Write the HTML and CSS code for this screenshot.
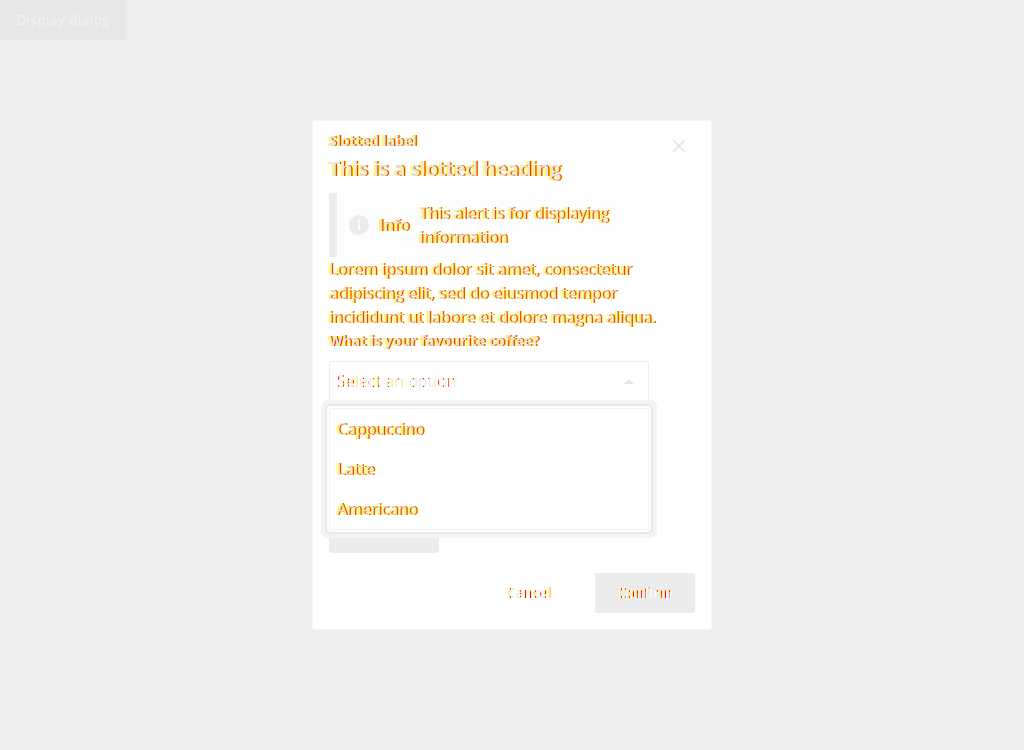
FILE: index.html
```html
<!DOCTYPE html>
<html lang="en">
<head>
<meta charset="utf-8">
<title>Dialog</title>
<link rel="stylesheet" href="styles.css">
</head>
<body>
<button class="launch" type="button">Display dialog</button>
<div class="backdrop">
  <section class="dialog" role="dialog" aria-labelledby="heading">
    <header class="dialog-header">
      <div class="titles">
        <p class="label ink">Slotted label</p>
        <h2 class="heading ink" id="heading">This is a slotted heading</h2>
      </div>
      <button class="close" type="button" aria-label="Close">
        <svg width="12" height="12" viewBox="0 0 12 12"><path d="M.5 .5 11.5 11.5M11.5 .5 .5 11.5" stroke="#e5e5e5" stroke-width="1.6" fill="none"/></svg>
      </button>
    </header>
    <div class="alert">
      <svg width="20" height="20" viewBox="0 0 20 20"><circle cx="10" cy="10" r="10" fill="#ebebeb"/><path d="M9 5h2v2H9zM9 8h2v7H9z" fill="#fff"/></svg>
      <strong class="alert-title ink">Info</strong>
      <span class="ink">This alert is for displaying information</span>
    </div>
    <p class="copy ink">Lorem ipsum dolor sit amet, consectetur adipiscing elit, sed do eiusmod tempor incididunt ut labore et dolore magna aliqua.</p>
    <div class="field">
      <label class="field-label ink" for="coffee">What is your favourite coffee?</label>
      <div class="picker">
        <select class="select ink faint" id="coffee"><option>Select an option</option></select>
        <svg class="arrow" width="10" height="5" viewBox="0 0 10 5"><path d="M0 5 5 0 10 5z" fill="#e6e6e6"/></svg>
        <ul class="menu" role="listbox" aria-label="Coffee">
          <li class="ink" role="option">Cappuccino</li>
          <li class="ink" role="option">Latte</li>
          <li class="ink" role="option">Americano</li>
        </ul>
      </div>
    </div>
    <button class="block-button" type="button" aria-label="Submit"></button>
    <footer class="actions">
      <button class="button" type="button"><span class="ink faint">Cancel</span></button>
      <button class="button primary" type="button"><span class="ink light">Confirm</span></button>
    </footer>
  </section>
</div>
</body>
</html>
```
FILE: styles.css
```css
* { box-sizing: border-box; }
body {
  margin: 0;
  min-height: 100vh;
  background: #eee;
  font: 16px/24px "Open Sans", "Noto Sans", sans-serif;
}
p, h2, ul { margin: 0; padding: 0; }
svg { display: block; flex: none; }
button { font: inherit; border: 0; background: none; }
.ink {
  color: transparent;
  background-image: repeating-linear-gradient(90deg, #e6e6e6 0 3px, #ff0 3px 5px, #f00 5px 7px);
  -webkit-background-clip: text;
  background-clip: text;
}
.ink:not(.faint, .light) {
  color: #e6e6e6;
  background: none;
  text-shadow: 1px 0 #f00, -1px 0 #ff0, 2px 0 #ff0;
}
.faint { background-image: repeating-linear-gradient(90deg, #e9e9e9 0 2px, #ff0 2px 3px, #f00 3px 4px, #e9e9e9 4px 5px); }
.light { background-image: repeating-linear-gradient(90deg, #fafafa 0 2px, #ff0 2px 3px, #f00 3px 4px); }
.launch {
  height: 40px;
  padding: 0 16px;
  border-radius: 2px;
  background: #e7e7e7;
  color: #f0f0f0;
  font-size: 14px;
  font-weight: 600;
}
.backdrop {
  position: fixed;
  inset: 0;
  display: grid;
  place-items: center;
  pointer-events: none;
}
.dialog {
  width: 400px;
  max-width: 100%;
  padding: 8px 16px 16px;
  border: 1px solid #f5f5f5;
  background: #fff;
  pointer-events: auto;
}
.dialog-header { display: flex; justify-content: space-between; align-items: flex-start; }
.label { font-size: 14px; font-weight: 700; }
.heading { font-size: 20px; font-weight: 600; line-height: 32px; margin-bottom: 8px; }
.close { display: grid; place-items: center; width: 32px; height: 34px; padding: 0; }
.alert {
  display: flex;
  align-items: center;
  gap: 10px;
  padding: 8px 12px;
  border-left: 8px solid #ebebeb;
  border-radius: 2px;
  background: #fdfdfd;
}
.alert-title { font-size: 16px; font-weight: 600; }
.field { margin-bottom: 112px; }
.field-label { display: block; font-size: 14px; font-weight: 700; margin-bottom: 8px; }
.picker { position: relative; max-width: 320px; }
.select {
  display: block;
  width: 100%;
  height: 40px;
  padding: 0 7px;
  border: 1px solid #ededed;
  border-radius: 2px;
  appearance: none;
  font: inherit;
}
.arrow { position: absolute; right: 15px; top: 18px; }
.menu {
  position: absolute;
  top: 47px;
  left: 0;
  right: 0;
  list-style: none;
  border: 1px solid #f2f2f2;
  background: #fff;
  box-shadow: 0 0 0 2px #fff, 0 0 0 4px #e9e9e9, 0 0 0 8px #f4f4f4;
  border-radius: 2px;
}
.menu li { height: 40px; padding: 0 7px; line-height: 40px; }
.block-button { display: block; width: 110px; height: 40px; border-radius: 2px; background: #ececec; }
.actions { display: flex; justify-content: flex-end; gap: 20px; margin-top: 20px; }
.button { min-width: 92px; height: 40px; padding: 0 22px; border-radius: 2px; font-size: 14px; font-weight: 600; }
.primary { min-width: 100px; background: #ececec; }
```
